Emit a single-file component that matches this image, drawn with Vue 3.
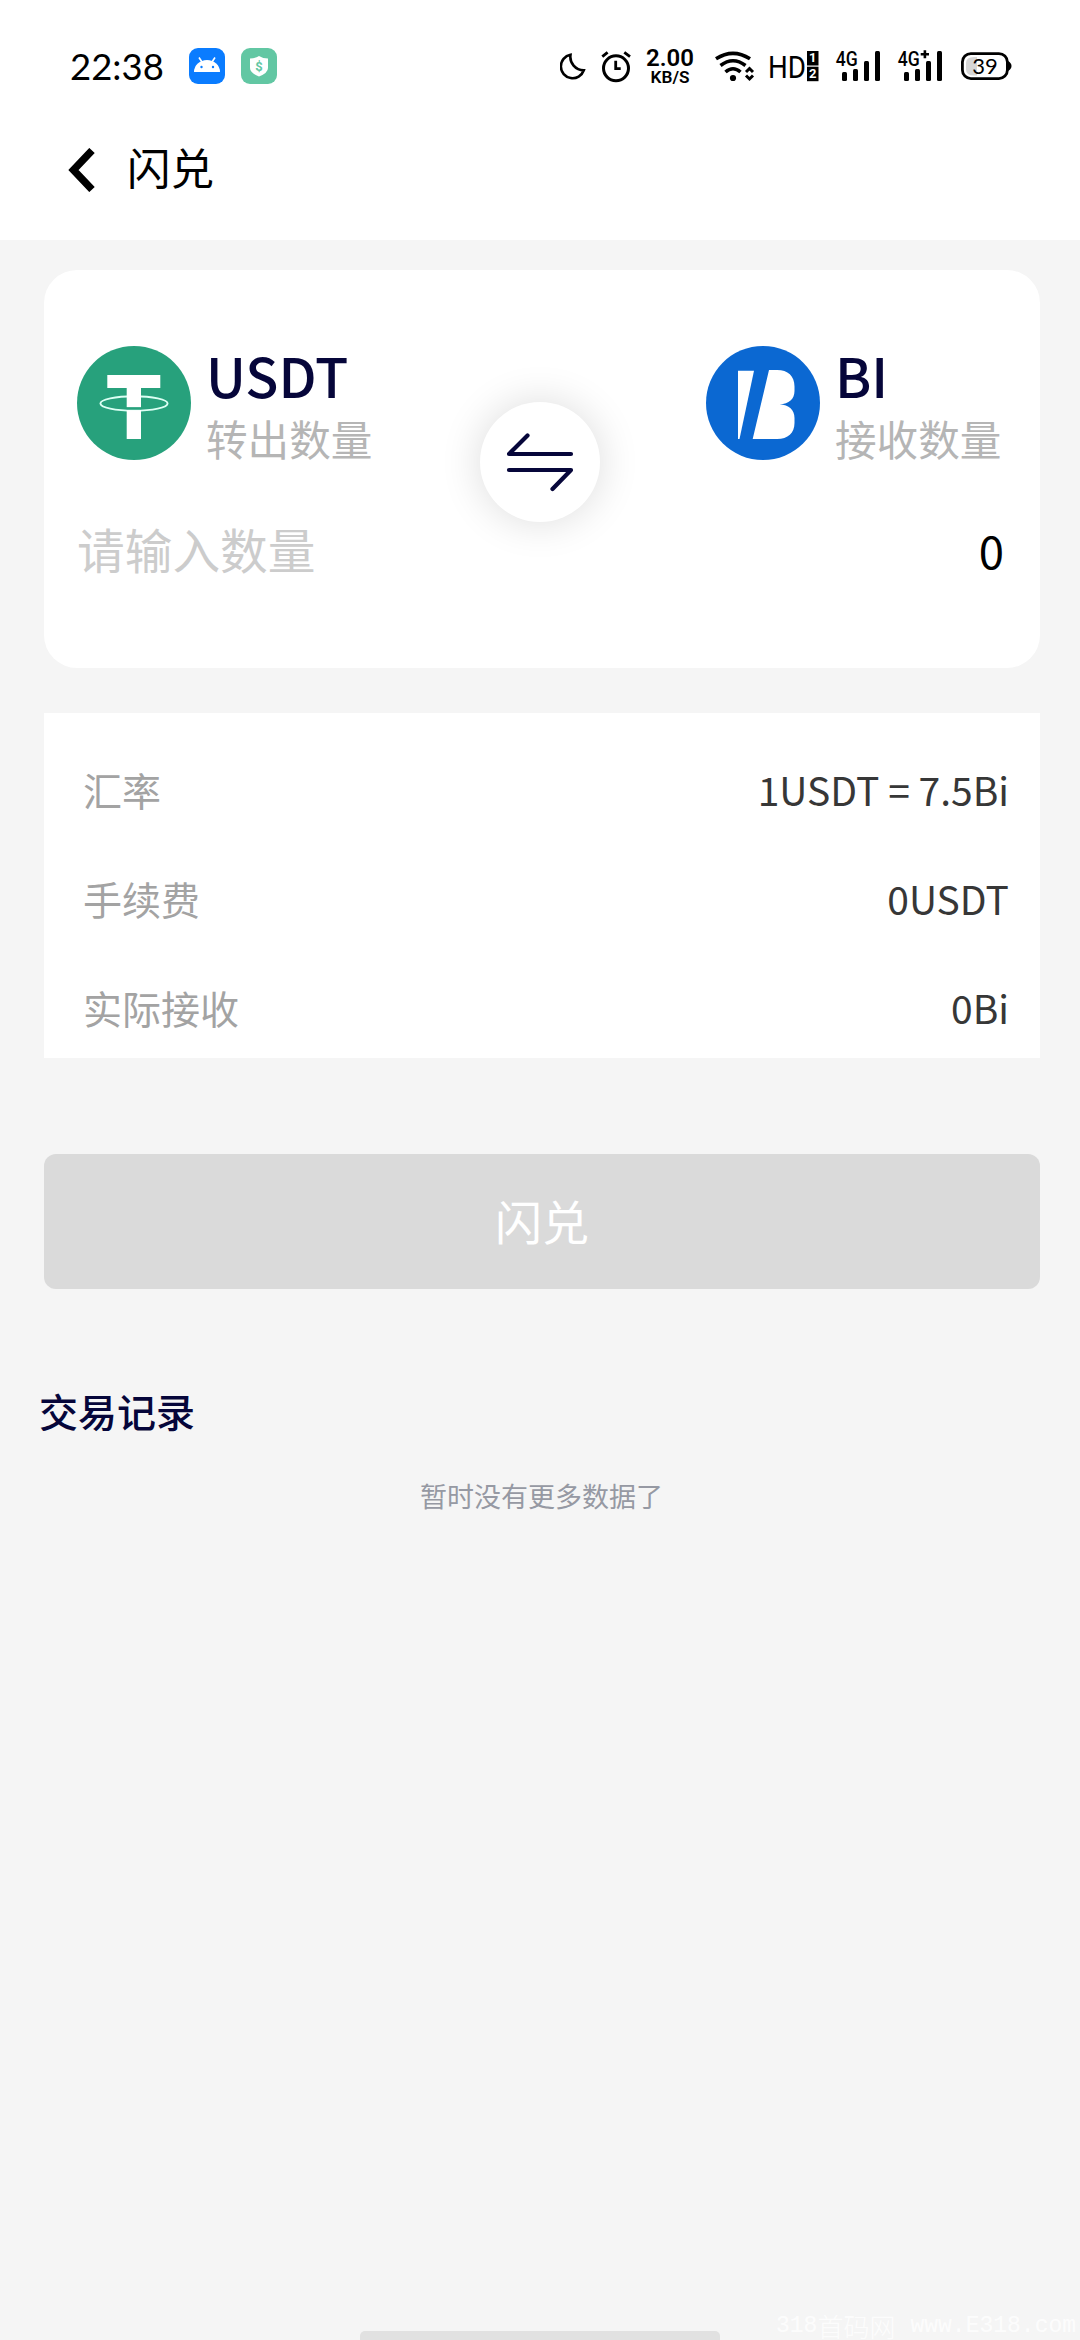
<script setup>
const details = [
  { label: '汇率', value: '1USDT = 7.5Bi' },
  { label: '手续费', value: '0USDT' },
  { label: '实际接收', value: '0Bi' },
]
const signals = ['4G', '4G+']
</script>

<template>
  <div class="page">
    <header class="top">
      <div class="status">
        <span class="clock">22:38</span>
        <svg class="app-icon" viewBox="0 0 36 36">
          <rect width="36" height="36" rx="9" fill="#0a7cff" />
          <path d="M5 24a13 12 0 0 1 26 0z" fill="#fff" />
          <path d="M13 14l-3-4.500M23 14l3-4.500" stroke="#fff" stroke-width="1.600" />
          <circle cx="12.500" cy="19" r="1.200" fill="#0a7cff" />
          <circle cx="24" cy="19" r="1.200" fill="#0a7cff" />
        </svg>
        <svg class="app-icon shield" viewBox="0 0 36 36">
          <rect width="36" height="36" rx="9" fill="#62c7a3" />
          <path d="M18 8q4 2.500 9 2.500v9.500q0 5-9 8.500q-9-3.500-9-8.500v-9.500q5 0 9-2.500z" fill="#fff" />
          <text x="18" y="22.500" class="dollar">$</text>
        </svg>
        <div class="indicators">
          <svg class="moon" viewBox="0 0 26 40">
            <path d="M10.500 9.800A11.800 11.800 0 1 0 23.800 25.300A13.500 13.500 0 0 1 10.500 9.800z" class="line" stroke-width="2.600" />
          </svg>
          <svg class="alarm" viewBox="0 0 31 40">
            <circle cx="15" cy="23.300" r="12.500" class="line" stroke-width="3" />
            <path d="M14.700 15.700v8h5" class="line" stroke-width="2.800" />
            <path d="M1.300 11.700l5.300-4.300M23.300 7.400l5.700 4.300" class="line" stroke-width="2.800" />
          </svg>
          <svg class="speed" viewBox="0 0 50 40">
            <text x="1" y="21" class="rate" textLength="48" lengthAdjust="spacingAndGlyphs">2.00</text>
            <text x="5.500" y="37.700" class="unit" textLength="39" lengthAdjust="spacingAndGlyphs">KB/S</text>
          </svg>
          <svg class="wifi" viewBox="0 0 40 40">
            <path d="M1 13.800q17-11 34 0" class="line" stroke-width="3.600" />
            <path d="M5.500 20.500q12.500-9.500 25 0" class="line" stroke-width="3.600" />
            <path d="M10.500 27q7.500-6.500 15 0" class="line" stroke-width="3.600" />
            <circle cx="18" cy="33" r="3.100" />
            <path d="M31 27l3.500-3.500l3.500 3.500M31 30.500l3.500 3.500l3.500-3.500" class="line" stroke-width="3" />
          </svg>
          <svg class="hd" viewBox="0 0 50 40">
            <text x="-1" y="32.700" class="hd-text" textLength="38" lengthAdjust="spacingAndGlyphs">HD</text>
            <rect x="38" y="6" width="11.500" height="14.500" />
            <rect x="38" y="21.700" width="11.500" height="14.500" />
            <text x="43.700" y="17.200" class="sim">1</text>
            <text x="43.700" y="33.200" class="sim">2</text>
          </svg>
          <svg v-for="name in signals" :key="name" class="signal" viewBox="0 0 46 40">
            <text x="0.800" y="21" class="net" textLength="22" lengthAdjust="spacingAndGlyphs">4G</text>
            <path v-if="name === '4G+'" d="M23.700 9.300h8.300M27.900 5.300v8" class="line" stroke-width="2.600" />
            <rect x="7" y="27" width="5" height="9" rx="1.500" />
            <rect x="18" y="24" width="5" height="12" rx="1.500" />
            <rect x="29" y="16" width="5" height="20" rx="1.500" />
            <rect x="40" y="6" width="5" height="30" rx="1.500" />
          </svg>
          <svg class="battery" viewBox="0 0 52 40">
            <path d="M14 12h3v18.500h-3q-8 0-8-6v-6.500q0-6 8-6z" fill="#d6d6d6" />
            <rect x="2.400" y="8.600" width="45" height="25" rx="8.500" class="line" stroke-width="2.800" />
            <path d="M48 16q3.500 2 3.500 5t-3.500 5z" />
            <text x="25" y="29" class="level">39</text>
          </svg>
        </div>
      </div>
      <nav class="nav">
        <svg class="back" viewBox="0 0 27 44">
          <path d="M24 2.500L5.500 22L24 41.500" fill="none" stroke="#000" stroke-width="7.500" />
        </svg>
        <h1>闪兑</h1>
      </nav>
    </header>

    <section class="exchange">
      <div class="coin">
        <svg class="logo" viewBox="0 0 114 114">
          <circle cx="57" cy="57" r="57" fill="#27a17c" />
          <ellipse cx="57" cy="57.500" rx="33.600" ry="7.300" fill="none" stroke="#dcfff4" stroke-width="1.900" />
          <path d="M30.300 29H83.300V42H64V61.200H49.700V42H30.300z" fill="#fff" />
          <path d="M49.700 64.200H64V93H49.700z" fill="#fff" />
          <path d="M49 62.300h16" stroke="#27a17c" stroke-width="1.500" />
        </svg>
        <div class="names"><strong>USDT</strong><span>转出数量</span></div>
      </div>
      <button class="swap" aria-label="swap">
        <svg viewBox="0 0 120 120">
          <path d="M91 52H29L47.500 33.500M29 68H91L72.500 87" fill="none" stroke="#06063a" stroke-width="4.200" stroke-linecap="round" stroke-linejoin="round" />
        </svg>
      </button>
      <div class="coin receive">
        <svg class="logo" viewBox="0 0 114 114">
          <circle cx="57" cy="57" r="57" fill="#0b68d2" />
          <path d="M32 24.700H48L33.500 93H32z" fill="#fff" />
          <path d="M63 24H71C82 24 88.500 30 88.500 40.500V45C88.500 53 83 58 73.700 58.300C83 59 88.500 64 88.500 72V77C88.500 87 82 93 71 93H46.700z" fill="#fff" />
        </svg>
        <div class="names"><strong>BI</strong><span>接收数量</span></div>
      </div>
      <input class="amount" placeholder="请输入数量" />
      <div class="result">0</div>
    </section>

    <section class="details">
      <div v-for="row in details" :key="row.label" class="row">
        <span class="label">{{ row.label }}</span>
        <span class="value">{{ row.value }}</span>
      </div>
    </section>

    <button class="submit">闪兑</button>
    <h2>交易记录</h2>
    <p class="empty">暂时没有更多数据了</p>

    <footer>
      <div class="home-bar"></div>
      <div class="mark"><span>318</span><span class="mark-cn">首码网</span><span class="mark-url">www.E318.com</span></div>
    </footer>
  </div>
</template>

<style>
body {
  background: #f5f5f5;
}
</style>

<style scoped>
* {
  box-sizing: border-box;
  margin: 0;
}
.page {
  display: flex;
  flex-direction: column;
  width: 1080px;
  height: 2340px;
  overflow: hidden;
  background: #f5f5f5;
  font-family: "Noto Sans CJK SC", sans-serif;
  color: #000;
}
button,
input {
  border: 0;
  padding: 0;
  font-family: inherit;
}
svg {
  display: block;
  flex: none;
}
.top {
  height: 240px;
  background: #fff;
}
.status {
  display: flex;
  align-items: center;
  height: 132px;
  padding: 0 68px 0 70px;
}
.clock {
  width: 119px;
  font: 400 36.5px/44px Lato, sans-serif;
}
.app-icon {
  width: 36px;
  height: 36px;
}
.shield {
  margin-left: 16px;
}
.dollar {
  font: 700 13px Roboto, sans-serif;
  fill: #62c7a3;
  text-anchor: middle;
}
.indicators {
  display: flex;
  align-items: center;
  height: 40px;
  margin: 0 0 2px auto;
}
.indicators svg {
  height: 40px;
}
.line {
  fill: none;
  stroke: #000;
}
.moon { width: 26px; }
.alarm { width: 31px; margin-left: 15px; }
.speed { width: 50px; margin-left: 13px; }
.rate { font: 600 23.5px Roboto, sans-serif; }
.unit { font: 600 17px Roboto, sans-serif; }
.wifi { width: 40px; margin-left: 20px; }
.hd { width: 50px; margin-left: 14px; }
.signal { width: 46px; margin-left: 16px; }
.battery { width: 52px; margin-left: 17px; }
.hd-text { font: 400 32px Roboto, sans-serif; }
.sim {
  font: 700 13px Roboto, sans-serif;
  fill: #fff;
  text-anchor: middle;
}
.net { font: 500 21px Roboto, sans-serif; }
.level {
  font: 400 22px Lato, sans-serif;
  text-anchor: middle;
}
.nav {
  display: flex;
  align-items: center;
  height: 76px;
  padding-left: 68px;
}
.back {
  width: 27px;
  height: 44px;
}
.nav h1 {
  margin: 0 0 7px 32px;
  font-size: 43.5px;
  font-weight: 400;
  line-height: 68px;
}
.exchange {
  display: grid;
  grid-template-columns: 1fr 120px 1fr;
  grid-template-rows: 114px 70px;
  row-gap: 53px;
  width: 996px;
  height: 398px;
  margin: 30px 0 0 44px;
  padding: 76px 37px 0 33px;
  border-radius: 33px;
  background: #fff;
}
.coin {
  display: flex;
}
.receive {
  justify-content: flex-end;
}
.logo {
  width: 114px;
  height: 114px;
}
.names {
  display: flex;
  flex-direction: column;
  width: 168px;
  margin: -4px 0 0 15px;
}
.names strong {
  font-size: 54.5px;
  font-weight: 500;
  line-height: 66px;
  color: #06063a;
}
.names span {
  font-size: 41.6px;
  line-height: 60px;
  white-space: nowrap;
  color: #b5b5b5;
}
.swap {
  grid-column: 2;
  grid-row: 1 / 3;
  width: 120px;
  height: 120px;
  margin-top: 56px;
  border-radius: 50%;
  background: #fff;
  box-shadow: 0 0 42px rgba(0, 0, 0, 0.14);
}
.amount {
  grid-column: 1;
  grid-row: 2;
  width: 100%;
  height: 70px;
  background: transparent;
  font-size: 47.7px;
}
.amount::placeholder {
  color: #ccc;
  opacity: 1;
}
.result {
  grid-column: 3;
  grid-row: 2;
  margin-right: -1px;
  font-size: 45.5px;
  line-height: 72px;
  text-align: right;
}
.details {
  width: 996px;
  height: 345px;
  margin: 45px 0 0 44px;
  padding: 21px 31px 0 39px;
  background: #fff;
}
.row {
  display: flex;
  align-items: center;
  justify-content: space-between;
  height: 109px;
  font-size: 39px;
}
.label {
  color: #a3a3a3;
}
.value {
  color: #373737;
}
.submit {
  width: 996px;
  height: 135px;
  margin: 96px 0 0 44px;
  padding-bottom: 5px;
  border-radius: 12px;
  background: #dadada;
  font-size: 47px;
  color: #fff;
}
h2 {
  margin: 91px 0 0 39px;
  font-size: 39px;
  font-weight: 500;
  line-height: 60px;
  color: #06063a;
}
.empty {
  margin: 36px 0 0 3px;
  font-size: 27px;
  line-height: 40px;
  text-align: center;
  color: #9699a3;
}
footer {
  display: grid;
  grid-template-columns: 360px 360px 56px 304px;
  align-items: end;
  height: 30px;
  margin-top: auto;
}
.home-bar {
  grid-column: 2;
  height: 9px;
  border-radius: 5px 5px 0 0;
  background: #e1e1e1;
}
.mark {
  grid-column: 4;
  display: flex;
  font: 400 23px/28px "Liberation Mono", monospace;
  white-space: nowrap;
  color: rgba(255, 255, 255, 0.8);
}
.mark-cn {
  font-family: "Noto Sans CJK SC", sans-serif;
  font-weight: 300;
  font-size: 26px;
}
.mark-url {
  margin-left: 15px;
}
</style>
